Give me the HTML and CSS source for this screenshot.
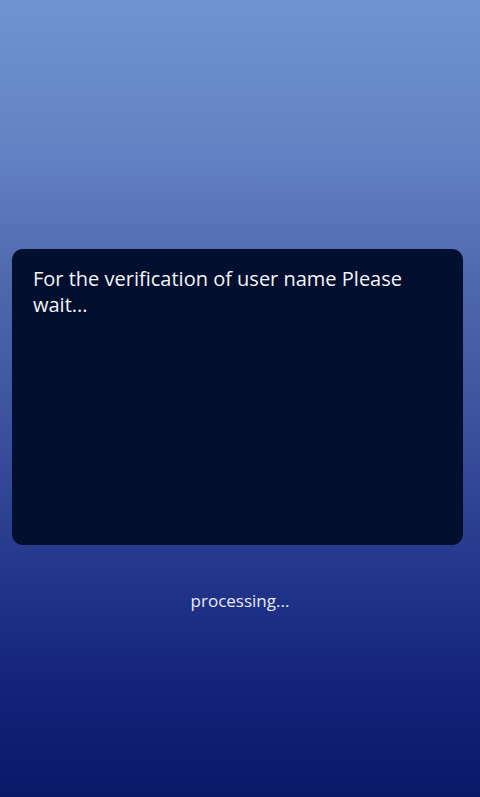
FILE: index.html
```html
<!DOCTYPE html>
<html>
<head>
<meta charset="utf-8">
<link rel="stylesheet" href="styles.css">
</head>
<body>
<div class="screen">
  <div class="dialog">
    <p class="message">For the verification of user name Please wait...</p>
  </div>
  <p class="status">processing...</p>
</div>
</body>
</html>
```
FILE: styles.css
```css
html, body {
  margin: 0;
  padding: 0;
  width: 480px;
  height: 797px;
  overflow: hidden;
}
.screen {
  width: 480px;
  height: 797px;
  box-sizing: border-box;
  padding: 249px 17px 0 12px;
  background: linear-gradient(to bottom, #7093cf 0%, #6281c2 20%, #4f69ad 35%, #3a4f9c 55%, #23368a 72%, #15247a 85%, #0a1868 100%);
  font-family: "Open Sans", "Liberation Sans", sans-serif;
}
.dialog {
  height: 296px;
  background: #020f2e;
  border-radius: 11px;
  box-sizing: border-box;
  padding: 17px 30px 14px 21px;
}
.message {
  margin: 0;
  color: #f4f4f6;
  font-size: 20px;
  line-height: 26px;
  font-weight: 500;
}
.status {
  margin: 45px 0 0;
  text-align: center;
  color: #e6eaf4;
  font-size: 17px;
  line-height: 22px;
  font-weight: 500;
  padding-left: 5px;
}
```
